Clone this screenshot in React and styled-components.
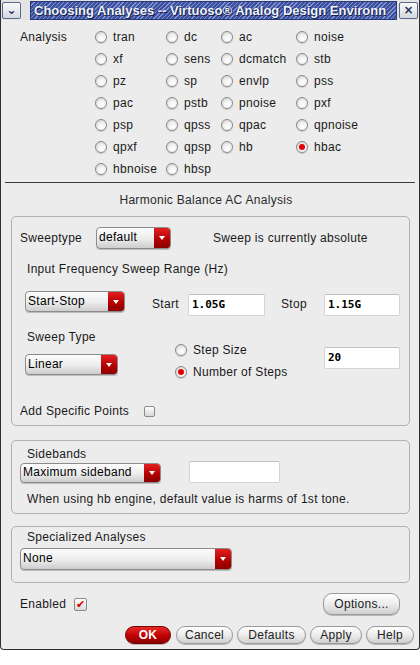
import styled, { createGlobalStyle } from "styled-components";

const GlobalStyle = createGlobalStyle`
  body {
    margin: 0;
    background: #fff;
    font-family: "Liberation Sans", Arial, sans-serif;
    font-size: 12px;
    letter-spacing: 0.3px;
    color: #161616;
  }
`;

const analyses = [
  ["tran", "dc", "ac", "noise"],
  ["xf", "sens", "dcmatch", "stb"],
  ["pz", "sp", "envlp", "pss"],
  ["pac", "pstb", "pnoise", "pxf"],
  ["psp", "qpss", "qpac", "qpnoise"],
  ["qpxf", "qpsp", "hb", "hbac"],
  ["hbnoise", "hbsp"],
];

export default function App() {
  return (
    <>
      <GlobalStyle />
      <Window>
        <TitleBar>
          <TitleButton>&#8964;</TitleButton>
          <Title>Choosing Analyses -- Virtuoso® Analog Design Environn</Title>
          <TitleButton>×</TitleButton>
        </TitleBar>

        <AnalysisGrid>
          <AnalysisLabel>Analysis</AnalysisLabel>
          {analyses.map((row, r) =>
            row.map((name, c) => (
              <Radio key={name} style={{ gridRow: r + 1, gridColumn: c + 2 }}>
                <RadioDot $on={name === "hbac"} />
                {name}
              </Radio>
            ))
          )}
        </AnalysisGrid>
        <Separator />
        <Heading>Harmonic Balance AC Analysis</Heading>

        <Group $pt={10} $pb={6}>
          <Row>
            <Label $w={76}>Sweeptype</Label>
            <Select $w={75} $h={22} text="default" />
            <Note>Sweep is currently absolute</Note>
          </Row>
          <SubLabel $mt={12}>Input Frequency Sweep Range (Hz)</SubLabel>
          <RangeRow>
            <Select $w={100} $top text="Start-Stop" />
            <Label $w={36} $ml={27}>Start</Label>
            <Field $w={77} $bottom>1.05G</Field>
            <Label $w={43} $ml={16}>Stop</Label>
            <Field $w={76} $bottom>1.15G</Field>
          </RangeRow>
          <SweepRow>
            <SweepLeft>
              <SubLabel>Sweep Type</SubLabel>
              <Select $w={93} text="Linear" />
            </SweepLeft>
            <RadioStack>
              <Radio>
                <RadioDot />
                Step Size
              </Radio>
              <Radio>
                <RadioDot $on />
                Number of Steps
              </Radio>
            </RadioStack>
            <Field $w={76} $mt={18}>20</Field>
          </SweepRow>
          <CheckRow>
            <Label $w={124}>Add Specific Points</Label>
            <Check />
          </CheckRow>
        </Group>

        <Group $mt={14} $pt={6} $pb={6}>
          <SubLabel $lh={14}>Sidebands</SubLabel>
          <SidebandRow>
            <Select $w={141} $h={20} text="Maximum sideband" />
            <Field $w={91} $ml={28} />
          </SidebandRow>
          <SubLabel $mt={8}>When using hb engine, default value is harms of 1st tone.</SubLabel>
        </Group>

        <Group $mt={12} $pt={3} $pb={12}>
          <SubLabel $lh={14}>Specialized Analyses</SubLabel>
          <SelectGap>
            <Select $w={212} $h={22} text="None" />
          </SelectGap>
        </Group>

        <EnabledRow>
          <Label $w={54}>Enabled</Label>
          <Check $on>✔</Check>
          <Spacer />
          <Button $w={77} $h={22}>Options...</Button>
        </EnabledRow>

        <ButtonBar>
          <Button $w={46} $primary>OK</Button>
          <Button $w={57} $ml={1}>Cancel</Button>
          <Button $w={69}>Defaults</Button>
          <Button $w={52}>Apply</Button>
          <Button $w={48}>Help</Button>
        </ButtonBar>
      </Window>
    </>
  );
}

function Select({ text, ...rest }) {
  return (
    <SelectBox {...rest}>
      <SelectText>{text}</SelectText>
      <SelectArrow>
        <Triangle />
      </SelectArrow>
    </SelectBox>
  );
}

const Window = styled.div`
  width: 420px;
  box-sizing: border-box;
  border: 1px solid #2e2e2e;
  border-top: none;
  border-radius: 0 0 4px 4px;
  background: #ececec;
  padding-bottom: 5px;
  display: flex;
  flex-direction: column;
`;

const TitleBar = styled.div`
  height: 20px;
  display: flex;
  align-items: center;
  padding: 0 1px 0 1px;
  background: #e4e4e4;
`;

const TitleButton = styled.div`
  width: 19px;
  height: 17px;
  box-sizing: border-box;
  border: 1px solid #5a6a8a;
  border-radius: 2px;
  background: linear-gradient(#fafafa, #d4d8e0);
  color: #24325a;
  font-family: "DejaVu Sans", sans-serif;
  font-size: 12px;
  font-weight: bold;
  line-height: 14px;
  letter-spacing: 0;
  text-align: center;
  &:first-child {
    margin-right: 9px;
  }
  &:last-child {
    margin-left: 2px;
  }
`;

const Title = styled.div`
  flex: 1;
  height: 19px;
  box-sizing: border-box;
  border: 1px solid #263a7a;
  padding-left: 3px;
  white-space: nowrap;
  background: repeating-linear-gradient(
    135deg,
    #3c509c 0px,
    #3c509c 2px,
    #7f90d4 2px,
    #7f90d4 3px
  );
  color: #eef2ff;
  font-size: 13px;
  font-weight: bold;
  letter-spacing: 0;
  line-height: 17px;
  text-shadow: 1px 1px 0 #17214a, -1px 0 0 #2a3a78;
`;

const AnalysisGrid = styled.div`
  display: grid;
  grid-template-columns: 75px 71px 55px 75px 1fr;
  grid-auto-rows: 22px;
  margin-top: 6px;
  padding-left: 19px;
`;

const AnalysisLabel = styled.div`
  grid-row: 1;
  grid-column: 1;
  line-height: 22px;
  color: #1a1a1a;
`;

const Radio = styled.div`
  display: flex;
  align-items: center;
  gap: 6px;
  height: 22px;
  white-space: nowrap;
  color: #1a1a1a;
`;

const RadioDot = styled.span`
  width: 12px;
  height: 12px;
  flex: none;
  box-sizing: border-box;
  border-radius: 50%;
  border: 1px solid #8a8a8a;
  background: radial-gradient(circle at 60% 70%, #ffffff 0, #f2f2f2 45%, #c4c4c4 100%);
  box-shadow: 0 1px 1px #c8c8c8;
  display: flex;
  align-items: center;
  justify-content: center;
  &::after {
    content: "";
    width: 6px;
    height: 6px;
    border-radius: 50%;
    background: ${(p) => (p.$on ? "#e00000" : "transparent")};
  }
`;

const Separator = styled.div`
  height: 1px;
  margin: 2px 4px 0;
  background: #3c3c3c;
`;

const Heading = styled.div`
  margin-top: 9px;
  line-height: 16px;
  text-align: center;
  padding-right: 8px;
  color: #2a2a2a;
`;

const Group = styled.div`
  margin: ${(p) => p.$mt || 8}px 9px 0 10px;
  padding: ${(p) => p.$pt}px 8px ${(p) => p.$pb}px;
  border: 1px solid #b0b0b0;
  border-radius: 5px;
  display: flex;
  flex-direction: column;
`;

const Row = styled.div`
  display: flex;
  align-items: center;
  height: 22px;
`;

const Label = styled.div`
  width: ${(p) => p.$w}px;
  margin-left: ${(p) => p.$ml || 0}px;
  flex: none;
  white-space: nowrap;
  color: #1a1a1a;
`;

const Note = styled.div`
  margin-left: 42px;
  color: #1a1a1a;
`;

const SubLabel = styled.div`
  margin-top: ${(p) => p.$mt || 0}px;
  padding-left: 7px;
  line-height: ${(p) => p.$lh || 16}px;
  white-space: nowrap;
  color: #1a1a1a;
`;

const RangeRow = styled.div`
  display: flex;
  align-items: center;
  height: 25px;
  margin-top: 14px;
  padding-left: 5px;
`;

const SweepRow = styled.div`
  display: flex;
  align-items: flex-start;
  margin-top: 13px;
  padding-left: 5px;
`;

const SweepLeft = styled.div`
  width: 150px;
  flex: none;
  display: flex;
  flex-direction: column;
  gap: 9px;
  & > div:first-child {
    padding-left: 2px;
  }
`;

const RadioStack = styled.div`
  width: 149px;
  flex: none;
  margin-top: 10px;
  display: flex;
  flex-direction: column;
`;

const CheckRow = styled.div`
  display: flex;
  align-items: center;
  height: 16px;
  margin-top: 20px;
`;

const Check = styled.div`
  width: ${(p) => (p.$on ? 13 : 11)}px;
  height: ${(p) => (p.$on ? 13 : 11)}px;
  box-sizing: border-box;
  border: 1px solid #8a8a8a;
  border-radius: 2px;
  background: linear-gradient(#ffffff, #d8d8d8);
  color: #d40000;
  font-family: "DejaVu Sans", sans-serif;
  font-size: 11px;
  line-height: 11px;
  letter-spacing: 0;
  text-align: center;
`;

const SidebandRow = styled.div`
  display: flex;
  align-items: flex-end;
  height: 22px;
`;

const SelectGap = styled.div`
  margin-top: 4px;
  display: flex;
`;

const SelectBox = styled.div`
  display: flex;
  flex: none;
  width: ${(p) => p.$w}px;
  height: ${(p) => p.$h || 21}px;
  box-sizing: border-box;
  align-self: ${(p) => (p.$top ? "flex-start" : "auto")};
  border: 1px solid #8c8c8c;
  border-radius: 4px;
  overflow: hidden;
  background: linear-gradient(#fdfdfd, #ececec 55%, #cdcdcd);
  box-shadow: 0 1px 0 #bdbdbd;
`;

const SelectText = styled.div`
  flex: 1;
  padding-left: 2px;
  padding-bottom: 2px;
  display: flex;
  align-items: center;
  color: #000;
  white-space: nowrap;
  overflow: hidden;
`;

const SelectArrow = styled.div`
  width: 16px;
  flex: none;
  display: flex;
  align-items: center;
  justify-content: center;
  background: linear-gradient(#e42020, #b00000 60%, #8a0000);
`;

const Triangle = styled.span`
  width: 0;
  height: 0;
  border-left: 3px solid transparent;
  border-right: 3px solid transparent;
  border-top: 4px solid #fff;
`;

const Field = styled.div`
  width: ${(p) => p.$w}px;
  height: 22px;
  flex: none;
  box-sizing: border-box;
  margin-top: ${(p) => p.$mt || 0}px;
  margin-left: ${(p) => p.$ml || 0}px;
  align-self: ${(p) => (p.$bottom ? "flex-end" : "auto")};
  padding-left: 3px;
  background: #fff;
  border: 1px solid #d4d4d4;
  border-top-color: #c0c0c0;
  border-radius: 2px;
  font-family: "DejaVu Sans Mono", "Liberation Mono", monospace;
  font-weight: bold;
  font-size: 11px;
  letter-spacing: 0;
  line-height: 20px;
  color: #000;
`;

const EnabledRow = styled.div`
  display: flex;
  align-items: center;
  height: 22px;
  margin-top: 10px;
  padding: 0 19px 0 19px;
`;

const Spacer = styled.div`
  flex: 1;
`;

const ButtonBar = styled.div`
  display: flex;
  justify-content: flex-end;
  gap: 4px;
  margin-top: 11px;
  padding-right: 5px;
`;

const Button = styled.div`
  width: ${(p) => p.$w}px;
  height: ${(p) => p.$h || 18}px;
  margin-left: ${(p) => p.$ml || 0}px;
  box-sizing: border-box;
  border-radius: 9px;
  border: 1px solid ${(p) => (p.$primary ? "#7a0000" : "#9a9a9a")};
  background: ${(p) =>
    p.$primary
      ? "linear-gradient(#e82a2a, #c00000 55%, #8c0000)"
      : "linear-gradient(#ffffff, #ececec 50%, #cfcfcf)"};
  color: ${(p) => (p.$primary ? "#fff" : "#222")};
  font-weight: ${(p) => (p.$primary ? "bold" : "normal")};
  display: flex;
  align-items: center;
  justify-content: center;
  box-shadow: 0 1px 0 #b8b8b8;
`;
